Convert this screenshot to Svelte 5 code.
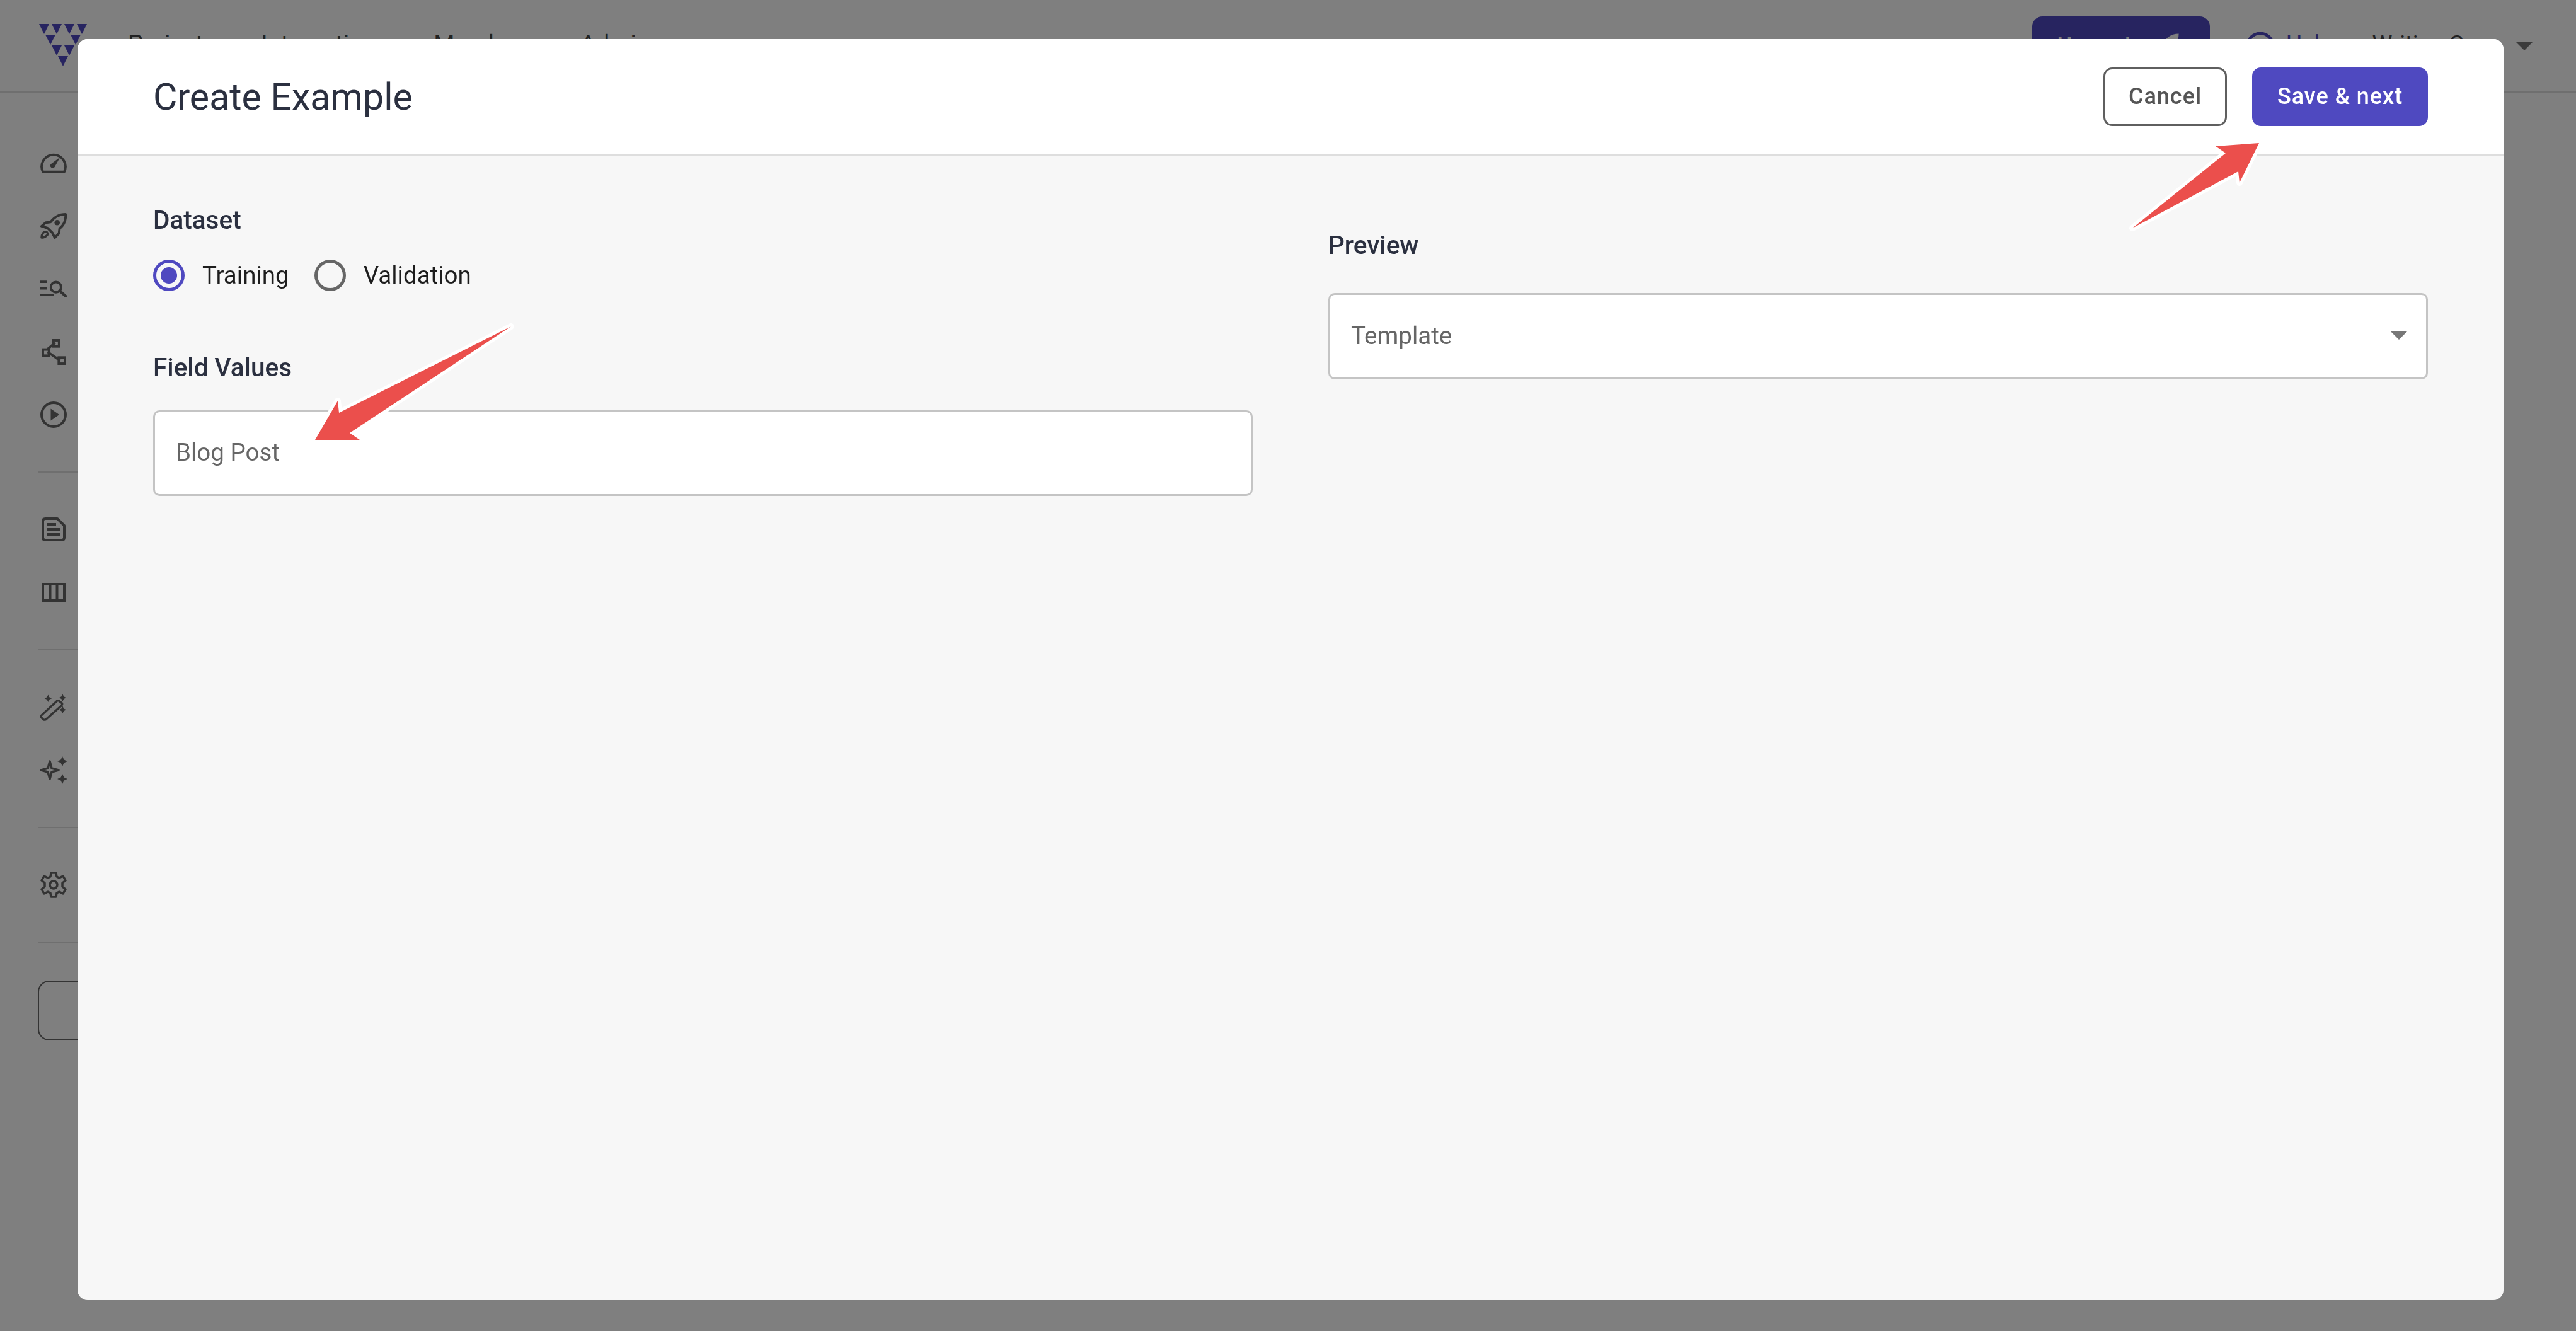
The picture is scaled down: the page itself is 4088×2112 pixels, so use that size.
<script>
  const logo = [
    [62, 38], [82, 38], [102, 38], [122, 38],
    [72, 55], [112, 55],
    [82, 72], [102, 72],
    [92, 89]
  ];
  const nav = ['Projects', 'Integrations', 'Members', 'Admin'];
</script>

<div class="page">
  <header class="topbar">
    <svg class="logo" width="80" height="70" viewBox="60 36 80 70">
      {#each logo as [x, y]}
        <polygon points="{x},{y} {x + 16},{y} {x + 8},{y + 16}" />
      {/each}
    </svg>
    <nav class="nav">
      {#each nav as item}
        <span>{item}</span>
      {/each}
    </nav>
    <div class="top-right">
      <button class="upgrade">
        Upgrade
        <svg width="44" height="44" viewBox="0 0 36 36"><path d="M34 2c-10 0-19 6-22 17l6 6C29 22 34 12 34 2z" fill="#fff" /></svg>
      </button>
      <span class="help">
        <svg width="46" height="46" viewBox="0 0 48 48"><circle cx="24" cy="24" r="21" fill="none" stroke="#4f49c0" stroke-width="5" /><circle cx="24" cy="24" r="9" fill="none" stroke="#4f49c0" stroke-width="5" /></svg>
        Help
      </span>
      <span class="workspace">Writing C</span>
      <span class="caret"></span>
    </div>
  </header>

  <aside class="sidebar">
    <div class="group">
      <span class="cell">
        <svg viewBox="0 0 44 35" width="42" height="33" class="ico">
          <path d="M4 32.500 A20 20 0 1 1 40 32.500 Z" fill="none" stroke-width="4" stroke-linejoin="round" />
          <path d="M33 8 L24 24 A4 4 0 1 1 18 19 Z" class="solid" />
        </svg>
      </span>
      <span class="cell">
        <svg viewBox="0 0 44 43" width="42" height="41" class="ico">
          <path d="M42 2C31 2 23 7 17 15L9 16 2 22 12 25 20 33 24 41 31 34 32 26C39 20 43 12 42 2Z" fill="none" stroke-width="4" stroke-linejoin="round" />
          <circle cx="28" cy="16" r="4.500" class="solid" />
          <path d="M2 41C2 35 5 31 10 31 13 33 13 36 10 38 8 40 5 41 2 41Z" fill="none" stroke-width="3.500" stroke-linejoin="round" />
        </svg>
      </span>
      <span class="cell">
        <svg viewBox="0 0 44 28" width="42" height="27" class="ico">
          <path d="M0 2H11M0 13H11M0 24H22" fill="none" stroke-width="4" />
          <circle cx="26" cy="11" r="8.500" fill="none" stroke-width="4" />
          <path d="M32 17L42 26" fill="none" stroke-width="4.500" stroke-linecap="round" />
        </svg>
      </span>
      <span class="cell">
        <svg viewBox="0 0 40 42" width="39" height="41" class="ico">
          <path d="M10 16L22 6M10 21L30 35" fill="none" stroke-width="4" />
          <rect x="18.500" y="2" width="10" height="10" fill="none" stroke-width="4" />
          <rect x="2" y="17" width="10" height="10" fill="none" stroke-width="4" />
          <rect x="28" y="30" width="10" height="10" fill="none" stroke-width="4" />
        </svg>
      </span>
      <span class="cell">
        <svg viewBox="0 0 42 42" width="42" height="42" class="ico">
          <circle cx="21" cy="21" r="19" fill="none" stroke-width="4" />
          <path d="M16.500 11.500L30 21 16.500 30.500Z" class="solid" />
        </svg>
      </span>
    </div>
    <div class="group">
      <span class="cell">
        <svg viewBox="0 0 38 38" width="38" height="38" class="ico">
          <path d="M6 2H25L36 13V32Q36 36 32 36H6Q2 36 2 32V6Q2 2 6 2Z" fill="none" stroke-width="4" stroke-linejoin="round" />
          <path d="M9 11H23M9 19H29M9 27H29" fill="none" stroke-width="4" />
        </svg>
      </span>
      <span class="cell">
        <svg viewBox="0 0 38 30" width="38" height="30" class="ico">
          <rect x="2" y="2" width="34" height="26" fill="none" stroke-width="4" />
          <path d="M13.500 2V28M24.500 2V28" fill="none" stroke-width="4" />
        </svg>
      </span>
    </div>
    <div class="group">
      <span class="cell">
        <svg viewBox="0 0 46 44" width="44" height="43" class="ico">
          <path d="M2 36L29 11 Q31 10 33 12L37 15 Q38 17 36 19L10 42 Q8 43 6 42L2 38Z" fill="none" stroke-width="3.500" stroke-linejoin="round" />
          <path d="M14 1L16 5 20 7 16 9 14 13 12 9 8 7 12 5ZM38 0L40 4 44 6 40 8 38 12 36 8 32 6 36 4ZM38 20L40 24 44 26 40 28 38 32 36 28 32 26 36 24Z" class="solid" />
        </svg>
      </span>
      <span class="cell">
        <svg viewBox="0 0 46 44" width="46" height="44" class="ico">
          <path d="M17 8L20 19 31 22 20 25 17 36 14 25 3 22 14 19Z" fill="none" stroke-width="3.500" stroke-linejoin="round" />
          <path d="M37 0L39.500 5.500 45 8 39.500 10.500 37 16 34.500 10.500 29 8 34.500 5.500ZM37 28L39.500 33.500 45 36 39.500 38.500 37 44 34.500 38.500 29 36 34.500 33.500Z" class="solid" />
        </svg>
      </span>
    </div>
    <div class="group">
      <span class="cell">
        <svg viewBox="0 0 42 42" width="42" height="42" class="ico">
          <path d="M17 2H25L26 8 30 10 36 7 40 14 35 18V24L40 28 36 35 30 32 26 34 25 40H17L16 34 12 32 6 35 2 28 7 24V18L2 14 6 7 12 10 16 8Z" fill="none" stroke-width="3.500" stroke-linejoin="round" />
          <circle cx="21" cy="21" r="6" fill="none" stroke-width="3.500" />
        </svg>
      </span>
    </div>
    <div class="side-box"></div>
  </aside>
</div>

<div class="overlay"></div>

<section class="modal">
  <div class="modal-head">
    <h1>Create Example</h1>
    <div class="actions">
      <button class="btn outline">Cancel</button>
      <button class="btn primary">Save &amp; next</button>
    </div>
  </div>
  <div class="modal-body">
    <div class="col">
      <div class="label">Dataset</div>
      <div class="radios">
        <label class="radio"><span class="dot checked"></span>Training</label>
        <label class="radio"><span class="dot"></span>Validation</label>
      </div>
      <div class="label field-label">Field Values</div>
      <div class="field">Blog Post</div>
    </div>
    <div class="col preview">
      <div class="label">Preview</div>
      <div class="field select">
        Template
        <span class="select-caret"></span>
      </div>
    </div>
  </div>
</section>

<!-- annotation arrows drawn on top of the screenshot -->
<svg class="arrows" width="4088" height="2112" viewBox="0 0 4088 2112">
  <polygon points="3384,362 3552,272 3554,290 3585,227 3516,232 3532,243" />
  <polygon points="811,518 555,687 571,698 500,698 536,636 538,655" />
</svg>

<style>
  :global(body) {
    margin: 0;
    background: #fff;
    font-family: Roboto, "Liberation Sans", sans-serif;
  }

  .page {
    width: 4088px;
    height: 2112px;
    overflow: hidden;
  }

  .topbar {
    display: flex;
    align-items: flex-start;
    box-sizing: border-box;
    height: 148px;
    border-bottom: 3px solid #dedede;
    padding: 36px 0 0 60px;
  }

  .logo polygon {
    fill: #4f49c0;
  }

  .nav {
    display: flex;
    gap: 72px;
    margin: 13px 0 0 63px;
    font-size: 38px;
    line-height: 42px;
    color: #444;
  }

  .top-right {
    display: flex;
    align-items: flex-start;
    margin-left: auto;
    margin-right: 69px;
    font-size: 36px;
    line-height: 42px;
    color: #444;
  }

  .upgrade {
    display: flex;
    align-items: center;
    gap: 16px;
    box-sizing: border-box;
    width: 282px;
    height: 94px;
    margin-top: -10px;
    padding: 0 30px 0 40px;
    border: 0;
    border-radius: 16px;
    background: #4f49c0;
    color: #fff;
    font: 500 36px Roboto, sans-serif;
  }

  .help {
    display: flex;
    gap: 18px;
    margin: 13px 0 0 57px;
    color: #4f49c0;
  }

  .help svg {
    flex: none;
    margin-top: 1px;
  }

  .workspace {
    margin: 13px 0 0 63px;
  }

  .caret {
    width: 0;
    height: 0;
    margin: 31px 0 0 83px;
    border-left: 13px solid transparent;
    border-right: 13px solid transparent;
    border-top: 13px solid #777;
  }

  .sidebar {
    display: flex;
    flex-direction: column;
    box-sizing: border-box;
    width: 200px;
    padding-left: 60px;
  }

  .group {
    display: flex;
    flex-direction: column;
    width: 140px;
    padding: 40px 0;
    border-bottom: 2px solid #dedede;
  }

  .group:first-child {
    padding-top: 60px;
  }

  .cell {
    display: flex;
    align-items: center;
    justify-content: center;
    width: 50px;
    height: 100px;
  }

  .ico {
    stroke: #666;
    flex: none;
  }

  .ico .solid {
    fill: #666;
    stroke: none;
  }

  .side-box {
    width: 220px;
    height: 91px;
    margin-top: 60px;
    border: 2px solid #666;
    border-radius: 18px;
  }

  .overlay {
    position: fixed;
    inset: 0;
    background: rgba(0, 0, 0, 0.5);
  }

  .modal {
    position: fixed;
    left: 123px;
    top: 62px;
    width: 3850px;
    height: 2001px;
    display: flex;
    flex-direction: column;
    overflow: hidden;
    border-radius: 16px;
    background: #f7f7f7;
  }

  .modal-head {
    display: flex;
    align-items: center;
    justify-content: space-between;
    box-sizing: border-box;
    height: 185px;
    padding: 0 120px;
    background: #fff;
    border-bottom: 3px solid #dedede;
  }

  h1 {
    margin: 0;
    font-size: 59px;
    font-weight: 400;
    color: #2b3040;
  }

  .actions {
    display: flex;
    gap: 40px;
  }

  .btn {
    box-sizing: border-box;
    height: 93px;
    border-radius: 14px;
    font: 500 36px Roboto, sans-serif;
    letter-spacing: 1px;
  }

  .btn.outline {
    width: 196px;
    background: #fff;
    border: 3px solid #5f5f5f;
    color: #555;
  }

  .btn.primary {
    width: 279px;
    background: #4f49c0;
    border: 0;
    color: #fff;
  }

  .modal-body {
    display: grid;
    grid-template-columns: 1fr 1fr;
    gap: 120px;
    padding: 76px 120px 0;
  }

  .label {
    font-size: 40.500px;
    line-height: 52px;
    font-weight: 500;
    color: #2b3040;
  }

  .radios {
    display: flex;
    gap: 40px;
    margin-top: 36px;
  }

  .radio {
    display: flex;
    align-items: center;
    gap: 28px;
    font-size: 38.500px;
    line-height: 52px;
    color: #1d1d1d;
  }

  .dot {
    box-sizing: border-box;
    width: 50px;
    height: 50px;
    border: 5px solid #666;
    border-radius: 50%;
  }

  .dot.checked {
    border-color: #4f49c0;
    background: radial-gradient(circle, #4f49c0 0 12.500px, transparent 13.500px);
  }

  .field-label {
    margin-top: 94px;
  }

  .field {
    display: flex;
    align-items: center;
    box-sizing: border-box;
    height: 136px;
    margin-top: 42px;
    padding: 0 33px 3px;
    border: 3px solid #c4c4c4;
    border-radius: 10px;
    background: #fff;
    font-size: 38.500px;
    color: #666;
  }

  .preview {
    padding-top: 40px;
  }

  .select {
    justify-content: space-between;
    height: 137px;
    margin-top: 50px;
  }

  .select-caret {
    width: 0;
    height: 0;
    margin-right: -3px;
    border-left: 13px solid transparent;
    border-right: 13px solid transparent;
    border-top: 13px solid #777;
  }

  .arrows {
    position: fixed;
    left: 0;
    top: 0;
    pointer-events: none;
  }

  .arrows polygon {
    fill: #eb4f4c;
    stroke: #fff;
    stroke-width: 10;
    stroke-linejoin: round;
    paint-order: stroke;
  }
</style>
